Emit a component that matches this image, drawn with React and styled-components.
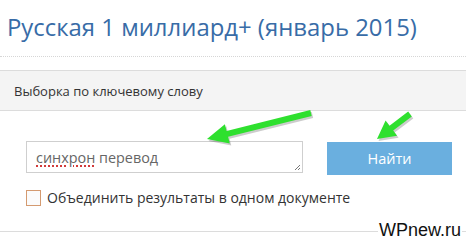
import React from "react";
import styled, { createGlobalStyle } from "styled-components";

const GlobalStyle = createGlobalStyle`
  html, body {
    margin: 0;
    padding: 0;
    background: #fff;
  }
  body {
    font-family: "Open Sans", "Noto Sans", sans-serif;
  }
`;

const Page = styled.div`
  position: relative;
  width: 466px;
  height: 244px;
  overflow: hidden;
  background: #fff;
`;

const Title = styled.h1`
  margin: 0;
  padding: 10px 0 0 7px;
  height: 46px;
  font-size: 23.9px;
  font-weight: 400;
  line-height: 34px;
  color: #386ca7;
  border-bottom: 1px dotted #d6d6d6;
  white-space: nowrap;
`;

const Panel = styled.div`
  margin-top: 13px;
  border-top: 1px solid #dcdcdc;
  border-bottom: 1px solid #dcdcdc;
  height: 160px;
`;

const PanelHeader = styled.div`
  height: 39px;
  display: flex;
  align-items: center;
  padding-left: 14px;
  background: #f4f4f4;
  border-bottom: 1px solid #dcdcdc;
  font-size: 13px;
  color: #333;
`;

const PanelBody = styled.div`
  padding: 30px 0 0 26px;
`;

const SearchRow = styled.div`
  display: flex;
  align-items: flex-start;
  gap: 24px;
`;

const InputBox = styled.div`
  position: relative;
  box-sizing: border-box;
  width: 277px;
  height: 32px;
  border: 1px solid #cfcfcf;
  padding-left: 9px;
  display: flex;
  align-items: center;
  font-size: 14.4px;
  color: #666;
`;

const Misspelled = styled.span`
  text-decoration: underline dotted #d23a3a;
  text-decoration-thickness: 2px;
  text-underline-offset: 3px;
`;

const Grip = styled.svg`
  position: absolute;
  right: 1px;
  bottom: 1px;
`;

const Button = styled.button`
  width: 125px;
  height: 33px;
  margin-top: 1px;
  border: none;
  background: #6aafdf;
  color: #fff;
  font-family: inherit;
  font-size: 14.5px;
  cursor: pointer;
`;

const CheckRow = styled.label`
  display: flex;
  align-items: center;
  gap: 6px;
  margin-top: 13px;
  font-size: 14px;
  color: #333;
`;

const Box = styled.span`
  box-sizing: border-box;
  width: 15px;
  height: 16px;
  border: 1px solid #d49a70;
  background: #fbfbfb;
`;

const Watermark = styled.div`
  position: absolute;
  right: 4px;
  bottom: 4px;
  padding: 0 1px;
  background: #fff;
  font-family: "Liberation Sans", Arial, sans-serif;
  font-size: 18px;
  line-height: 20px;
  color: #111;
`;

const Arrows = styled.svg`
  position: absolute;
  left: 0;
  top: 0;
  pointer-events: none;
`;

// builds an arrow outline from tail to tip
function arrowPoints([tx, ty], [px, py], shaft, headLen, headW) {
  const dx = px - tx;
  const dy = py - ty;
  const len = Math.hypot(dx, dy);
  const ux = dx / len;
  const uy = dy / len;
  const nx = -uy;
  const ny = ux;
  const bx = px - ux * headLen;
  const by = py - uy * headLen;
  const s = shaft / 2;
  const h = headW / 2;
  const pts = [
    [tx + nx * s, ty + ny * s],
    [bx + nx * s, by + ny * s],
    [bx + nx * h, by + ny * h],
    [px, py],
    [bx - nx * h, by - ny * h],
    [bx - nx * s, by - ny * s],
    [tx - nx * s, ty - ny * s],
  ];
  return pts.map((p) => p.map((v) => v.toFixed(1)).join(",")).join(" ");
}

function Arrow({ from, to, shaft, headLen, headW }) {
  const points = arrowPoints(from, to, shaft, headLen, headW);
  return (
    <g>
      <polygon points={points} fill="#000" opacity="0.2" transform="translate(1.5,2)" />
      <polygon points={points} fill="#2fe02f" />
    </g>
  );
}

export default function App() {
  return (
    <Page>
      <GlobalStyle />
      <Title>Русская 1 миллиард+ (январь 2015)</Title>
      <Panel>
        <PanelHeader>Выборка по ключевому слову</PanelHeader>
        <PanelBody>
          <SearchRow>
            <InputBox>
              <span>
                <Misspelled>синхрон</Misspelled> перевод
              </span>
              <Grip width="7" height="7" viewBox="0 0 7 7">
                <path d="M6 1 L1 6 M6 4 L4 6" stroke="#777" strokeWidth="1" />
              </Grip>
            </InputBox>
            <Button>Найти</Button>
          </SearchRow>
          <CheckRow>
            <Box />
            Объединить результаты в одном документе
          </CheckRow>
        </PanelBody>
      </Panel>
      <Watermark>WPnew.ru</Watermark>
      <Arrows width="466" height="244" viewBox="0 0 466 244">
        <Arrow from={[311, 113]} to={[207, 139]} shaft={6} headLen={21} headW={20} />
        <Arrow from={[410, 114]} to={[377, 139]} shaft={6} headLen={18} headW={19} />
      </Arrows>
    </Page>
  );
}
